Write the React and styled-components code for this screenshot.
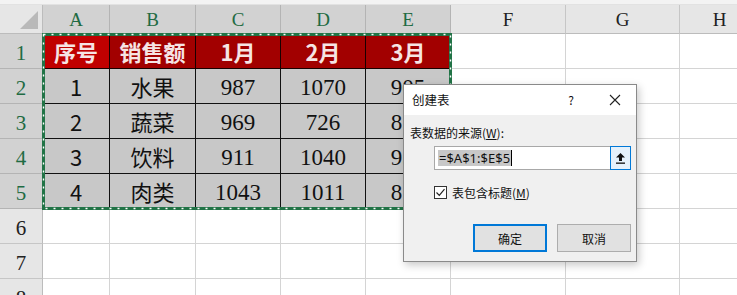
import React from "react";
import styled, { createGlobalStyle } from "styled-components";

const Global = createGlobalStyle`
  html, body { margin: 0; padding: 0; background: #fff; }
  body { width: 737px; height: 295px; overflow: hidden; }
`;

const COLS = [43, 67, 86, 85, 85, 85, 115, 114, 80];
const Page = styled.div`
  position: relative;
  width: 737px;
  height: 295px;
  overflow: hidden;
  background: #fff;
`;

const TopStrip = styled.div`
  height: 5px;
  background: #f3f3f3;
  border-bottom: 1px solid #e2e2e2;
  box-sizing: border-box;
`;

const Sheet = styled.div`
  display: grid;
  grid-template-columns: ${COLS.map((c) => c + "px").join(" ")};
  grid-template-rows: 29px repeat(8, 35px);
`;

const Cell = styled.div`
  box-sizing: border-box;
  display: flex;
  align-items: center;
  justify-content: center;
  border-right: 1px solid #d4d4d4;
  border-bottom: 1px solid #d4d4d4;
  overflow: hidden;
  white-space: nowrap;
`;

const Corner = styled(Cell)`
  background: #e6e6e6;
  border-right: 1px solid #bcbcbc;
  border-bottom: 1px solid #bcbcbc;
  position: relative;
  justify-content: flex-end;
  align-items: flex-end;
  padding: 0 4px 4px 0;
`;

const Triangle = styled.div`
  width: 0;
  height: 0;
  border-left: 18px solid transparent;
  border-bottom: 18px solid #b9b9b9;
`;

const ColHead = styled(Cell)`
  background: ${(p) => (p.$sel ? "#d2d2d2" : "#e6e6e6")};
  color: ${(p) => (p.$sel ? "#1f6b43" : "#222")};
  border-right: 1px solid ${(p) => (p.$sel ? "#b4b4b4" : "#c6c6c6")};
  border-bottom: 1px solid ${(p) => (p.$sel ? "#217346" : "#bcbcbc")};
  font-family: "Liberation Serif", "DejaVu Serif", serif;
  font-size: 19px;
  padding-top: 2px;
`;

const RowHead = styled(Cell)`
  background: ${(p) => (p.$sel ? "#d2d2d2" : "#e6e6e6")};
  color: ${(p) => (p.$sel ? "#1f6b43" : "#222")};
  border-right: 1px solid ${(p) => (p.$sel ? "#217346" : "#bcbcbc")};
  border-bottom: 1px solid ${(p) => (p.$sel ? "#b4b4b4" : "#c6c6c6")};
  font-family: "Liberation Serif", "DejaVu Serif", serif;
  font-size: 21px;
  padding-top: 4px;
`;

const HeadCell = styled(Cell)`
  background: ${(p) => (p.$first ? "#c00000" : "#a20000")};
  color: #f6e4e4;
  border-right: 1px solid #1a0000;
  border-bottom: 1px solid #1a0000;
  font-family: "Noto Sans CJK SC", "Noto Sans", sans-serif;
  font-weight: 700;
  font-size: 22px;
`;

const DataCell = styled(Cell)`
  background: #c8c8c8;
  color: #111;
  border-right: 1px solid #111;
  border-bottom: 1px solid #111;
  font-family: ${(p) =>
    p.$serif
      ? '"Liberation Serif", "DejaVu Serif", serif'
      : '"Noto Sans CJK SC", "Noto Sans", sans-serif'};
  font-size: ${(p) => (p.$serif ? "23px" : "22px")};
  padding-top: ${(p) => (p.$serif ? "3px" : "0")};
`;

const Blank = styled(Cell)``;

const Marquee = styled.svg`
  position: absolute;
  left: 42px;
  top: 33px;
  overflow: visible;
`;

const Dialog = styled.div`
  position: absolute;
  left: 403px;
  top: 84px;
  width: 234px;
  height: 178px;
  box-sizing: border-box;
  border: 1px solid #8a8a8a;
  background: #f0f0f0;
  box-shadow: 2px 3px 8px rgba(0, 0, 0, 0.22);
  display: flex;
  flex-direction: column;
  font-family: "Noto Sans CJK SC", "Noto Sans", sans-serif;
  font-size: 12px;
  color: #111;
`;

const TitleBar = styled.div`
  height: 30px;
  background: #fff;
  display: flex;
  align-items: center;
  padding-left: 8px;
`;

const Title = styled.div`
  flex: 1;
  font-size: 12.5px;
  line-height: 18px;
`;

const HelpBtn = styled.div`
  width: 22px;
  text-align: center;
  font-size: 12px;
  line-height: 18px;
  margin-right: 22px;
`;

const CloseBtn = styled.div`
  width: 22px;
  display: flex;
  justify-content: center;
  margin-right: 10px;
`;

const Body = styled.div`
  display: flex;
  flex-direction: column;
  padding: 9px 5px 0 6px;
`;

const Label = styled.div`
  font-size: 12px;
  line-height: 17px;
`;

const U = styled.span`
  text-decoration: underline;
`;

const InputRow = styled.div`
  margin-top: 5px;
  margin-left: 24px;
  width: 197px;
  height: 24px;
  box-sizing: border-box;
  border: 1px solid #a8a8a8;
  background: #fff;
  display: flex;
  align-items: center;
  position: relative;
`;

const InputText = styled.div`
  flex: 1;
  padding-left: 3px;
  display: flex;
  align-items: center;
  font-family: "Noto Sans", "Noto Sans CJK SC", sans-serif;
  font-size: 13px;
`;

const Selected = styled.span`
  background: #c8c8c8;
  line-height: 16px;
  padding: 0 1px;
  border-right: 1px solid #000;
`;

const RefBtn = styled.div`
  width: 21px;
  height: 24px;
  margin: -1px -1px -1px 0;
  box-sizing: border-box;
  border: 1px solid #0078d7;
  background: #e5f1fb;
  display: flex;
  align-items: center;
  justify-content: center;
`;

const CheckRow = styled.div`
  margin-top: 14px;
  margin-left: 24px;
  display: flex;
  align-items: center;
  gap: 5px;
`;

const CheckBox = styled.div`
  width: 13px;
  height: 13px;
  box-sizing: border-box;
  border: 1px solid #333;
  background: #fff;
  display: flex;
  align-items: center;
  justify-content: center;
`;

const Buttons = styled.div`
  margin-top: 23px;
  display: flex;
  justify-content: flex-end;
  gap: 10px;
`;

const Btn = styled.div`
  width: 74px;
  height: 28px;
  box-sizing: border-box;
  border: ${(p) => (p.$primary ? "2px solid #0078d7" : "1px solid #adadad")};
  background: #e1e1e1;
  display: flex;
  align-items: center;
  justify-content: center;
  font-size: 12px;
`;

const header = ["序号", "销售额", "1月", "2月", "3月"];
const rows = [
  ["1", "水果", "987", "1070", "905"],
  ["2", "蔬菜", "969", "726", "856"],
  ["3", "饮料", "911", "1040", "932"],
  ["4", "肉类", "1043", "1011", "874"],
];
const letters = ["A", "B", "C", "D", "E", "F", "G", "H"];

export default function App() {
  return (
    <Page>
      <Global />
      <TopStrip />
      <Sheet>
        <Corner>
          <Triangle />
        </Corner>
        {letters.map((l, i) => (
          <ColHead key={l} $sel={i < 5}>
            {l}
          </ColHead>
        ))}
        <RowHead $sel>1</RowHead>
        {header.map((h, i) => (
          <HeadCell key={h} $first={i === 0}>
            {h}
          </HeadCell>
        ))}
        <Blank />
        <Blank />
        <Blank />
        {rows.map((r, ri) => (
          <React.Fragment key={ri}>
            <RowHead $sel>{ri + 2}</RowHead>
            {r.map((v, ci) => (
              <DataCell key={ci} $serif={ci >= 2}>
                {v}
              </DataCell>
            ))}
            <Blank />
            <Blank />
            <Blank />
          </React.Fragment>
        ))}
        {[6, 7, 8].map((n) => (
          <React.Fragment key={n}>
            <RowHead>{n}</RowHead>
            {letters.map((l) => (
              <Blank key={l} />
            ))}
          </React.Fragment>
        ))}
      </Sheet>

      <Marquee width="410" height="177" viewBox="0 0 410 177">
        <rect x="1.5" y="1.5" width="407" height="174" fill="none" stroke="#217346" strokeWidth="3" />
        <rect
          x="1.5"
          y="1.5"
          width="407"
          height="174"
          fill="none"
          stroke="#ffffff"
          strokeWidth="1.4"
          strokeDasharray="2 6"
        />
      </Marquee>

      <Dialog>
        <TitleBar>
          <Title>创建表</Title>
          <HelpBtn>?</HelpBtn>
          <CloseBtn>
            <svg width="12" height="12" viewBox="0 0 12 12">
              <path d="M1 1 L11 11 M11 1 L1 11" stroke="#222" strokeWidth="1.1" />
            </svg>
          </CloseBtn>
        </TitleBar>
        <Body>
          <Label>
            表数据的来源(<U>W</U>):
          </Label>
          <InputRow>
            <InputText>
              <Selected>=$A$1:$E$5</Selected>
            </InputText>
            <RefBtn>
              <svg width="11" height="12" viewBox="0 0 11 12">
                <path d="M5.5 1 L10 5.5 L7 5.5 L7 9 L4 9 L4 5.5 L1 5.5 Z" fill="#111" />
                <rect x="1" y="10.5" width="9" height="1.3" fill="#111" />
              </svg>
            </RefBtn>
          </InputRow>
          <CheckRow>
            <CheckBox>
              <svg width="11" height="11" viewBox="0 0 11 11">
                <path d="M1.5 5.5 L4.3 8.3 L9.5 2.2" fill="none" stroke="#222" strokeWidth="1.2" />
              </svg>
            </CheckBox>
            <Label>
              表包含标题(<U>M</U>)
            </Label>
          </CheckRow>
          <Buttons>
            <Btn $primary>确定</Btn>
            <Btn>取消</Btn>
          </Buttons>
        </Body>
      </Dialog>
    </Page>
  );
}
